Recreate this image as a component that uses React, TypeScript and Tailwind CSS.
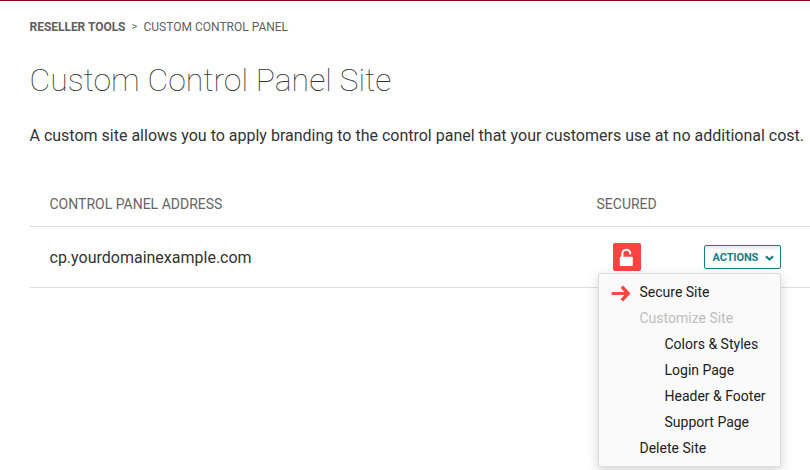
const menuItems = [
  { label: 'Secure Site', style: 'pl-[40.5px]' },
  { label: 'Customize Site', style: 'pl-[40.5px] text-[#bdbdbd]' },
  { label: 'Colors & Styles', style: 'pl-[65.5px]' },
  { label: 'Login Page', style: 'pl-[65.5px]' },
  { label: 'Header & Footer', style: 'pl-[65.5px]' },
  { label: 'Support Page', style: 'pl-[65.5px]' },
  { label: 'Delete Site', style: 'pl-[40.5px]' },
];

function UnlockIcon() {
  return (
    <svg width="28" height="28" viewBox="0 0 28 28">
      <path d="M9.4 14.5V10.6a3.9 3.9 0 0 1 7.8 0V11.2" fill="none" stroke="#fff" strokeWidth="2.1" />
      <rect x="6.8" y="13.8" width="13" height="9.2" rx="0.8" fill="#fff" />
    </svg>
  );
}

function ArrowIcon() {
  return (
    <svg className="absolute left-3 top-[11px]" width="20" height="17" viewBox="0 0 20 17" fill="none" stroke="#fc4340">
      <path d="M0.6 8.5H17" strokeWidth="2.9" />
      <path d="M10.8 1.6L17.1 8.5L10.8 15.4" strokeWidth="3.4" />
    </svg>
  );
}

function ActionsMenu() {
  return (
    <div className="absolute -left-[106px] top-7 h-[194px] w-[183px] rounded-xs border border-[#dcdcdc] bg-[#fafafa] pt-[5px] text-sm text-[#212121] shadow-[0_4px_12px_rgba(0,0,0,0.17)]">
      <ArrowIcon />
      <ul>
        {menuItems.map((item) => (
          <li key={item.label} className={`h-[26px] leading-[26px] whitespace-nowrap ${item.style}`}>
            {item.label}
          </li>
        ))}
      </ul>
    </div>
  );
}

export default function App() {
  return (
    <div className="h-[470px] w-[810px] overflow-hidden border-t border-[#8f001c] bg-white pl-[30px] font-['Roboto',sans-serif] text-[#333]">
      <nav className="-ml-[0.5px] flex pt-[17px] text-xs leading-[18px] text-[#606060]">
        <span className="w-[102px] font-bold tracking-[-0.03px]">RESELLER TOOLS</span>
        <span className="w-3 text-[11px]">&gt;</span>
        <span>CUSTOM CONTROL PANEL</span>
      </nav>
      <h1 className="-ml-[0.5px] mt-6 text-[32px] leading-10 font-thin whitespace-nowrap">Custom Control Panel Site</h1>
      <p className="-ml-[0.5px] mt-6 text-base leading-6 whitespace-nowrap">
        A custom site allows you to apply branding to the control panel that your customers use at no additional cost.
      </p>
      <section className="mt-[34px]">
        <header className="flex h-[45px] border-b border-[#dedede] pl-[19.5px] text-sm leading-[45px] text-[#666]">
          <span className="w-[547px]">CONTROL PANEL ADDRESS</span>
          <span>SECURED</span>
        </header>
        <div className="flex h-[61px] items-center border-b border-[#dedede] pl-[19.5px]">
          <span className="w-[563.5px] pt-0.5 text-base">cp.yourdomainexample.com</span>
          <span className="size-7 rounded-xs bg-[#fc4340]">
            <UnlockIcon />
          </span>
          <div className="relative ml-[63px]">
            <button className="flex h-6 w-[77px] items-center rounded-xs border border-[#138086] pt-0.5 pl-[7.5px] text-[11px] font-bold text-[#138086] shadow-[inset_0_3px_3px_rgba(0,0,0,0.08)]">
              <span className="w-[52.5px] text-left tracking-[-0.1px]">ACTIONS</span>
              <svg width="9" height="7" viewBox="0 0 9 7" fill="none" stroke="currentColor" strokeWidth="2.2">
                <path d="M0.9 1.2L4.5 4.6L8.1 1.2" />
              </svg>
            </button>
            <ActionsMenu />
          </div>
        </div>
      </section>
    </div>
  );
}
